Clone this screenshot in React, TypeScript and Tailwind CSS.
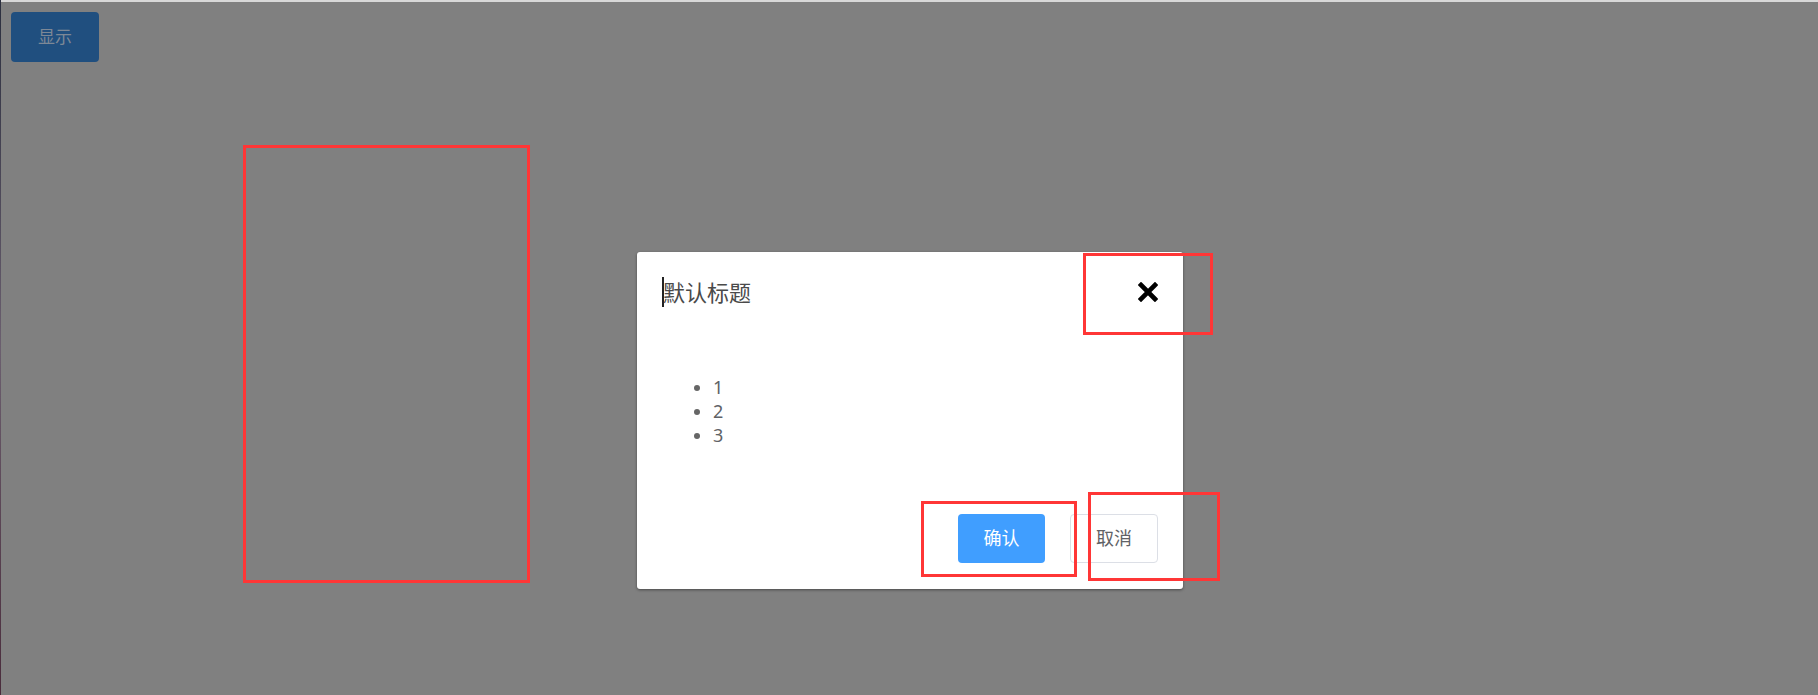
import React from 'react'

const font = 'font-["Noto_Sans","Noto_Sans_CJK_SC",sans-serif]'

const items = ['1', '2', '3']

// red annotation frames drawn over the screenshot
const marks = [
  'left-[243px] top-[145px] w-[287px] h-[438px]',
  'left-[1083px] top-[253px] w-[130px] h-[82px]',
  'left-[921px] top-[501px] w-[156px] h-[76px]',
  'left-[1088px] top-[492px] w-[132px] h-[89px]',
]

const CloseIcon = () => (
  <svg width="20" height="20" viewBox="0 0 20 20" className="block">
    <path d="M3 3 L17 17 M17 3 L3 17" stroke="#000" strokeWidth="4.6" strokeLinecap="square" />
  </svg>
)

const Dialog = () => {
  return (
    <div className="w-[546px] h-[337px] bg-white rounded-[3px] shadow-[0_1px_3px_rgba(0,0,0,0.45)] flex flex-col">
      <div className="flex flex-row items-center justify-between pt-[25px] pl-[25px] pr-[25px]">
        <div className="flex flex-row items-center h-[30px]">
          <span className="w-[2px] h-[30px] bg-[#222]" />
          <span className="text-[22px] leading-[30px] text-[#4a4a4a] -ml-px">默认标题</span>
        </div>
        <button className="w-[20px] h-[20px]">
          <CloseIcon />
        </button>
      </div>
      <ul className="list-disc pl-[76px] mt-[68px] text-[18px] leading-[24px] text-[#606266] marker:text-[#666]">
        {items.map((n) => (
          <li key={n}>{n}</li>
        ))}
      </ul>
      <div className="mt-auto flex flex-row justify-end gap-[25px] pr-[25px] pb-[26px]">
        <button className="w-[87px] h-[49px] rounded-[4px] bg-[#409eff] text-white text-[18px]">
          确认
        </button>
        <button className="w-[88px] h-[49px] rounded-[4px] bg-white border border-[#dcdfe6] text-[#606266] text-[18px]">
          取消
        </button>
      </div>
    </div>
  )
}

export default function App() {
  return (
    <div className={`${font} relative w-full h-[695px] bg-[#808080] overflow-hidden flex flex-col`}>
      <div className="h-[2px] bg-[#d8d8d8]" />
      <div className="absolute left-0 top-0 w-px h-full bg-gradient-to-b from-[#2b2f3f] via-[#6b5f6f] to-[#4a2c3c]" />
      <div className="pl-[11px] pt-[10px]">
        <button className="w-[88px] h-[50px] rounded-[4px] bg-[#204f7f] text-[#7d8896] text-[17px]">
          显示
        </button>
      </div>
      <div className="flex flex-row justify-center pl-[2px] mt-[190px]">
        <Dialog />
      </div>
      {marks.map((m) => (
        <div key={m} className={`absolute ${m} border-[3px] border-[#ff3636]`} />
      ))}
    </div>
  )
}
